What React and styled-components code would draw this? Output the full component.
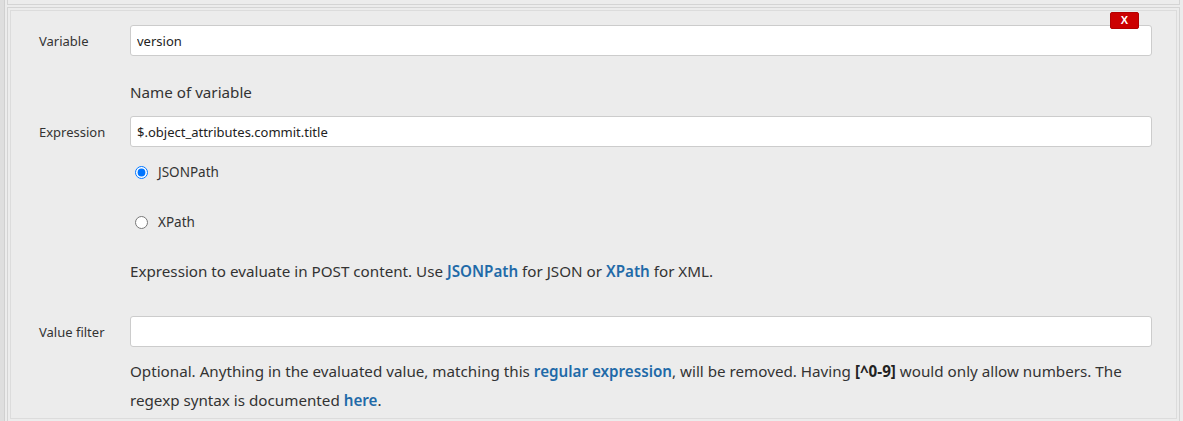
import styled, { createGlobalStyle } from "styled-components";

const GlobalStyle = createGlobalStyle`
  body {
    margin: 0;
    background: #ececec;
    font-family: "Noto Sans", "Open Sans", sans-serif;
    color: #333;
  }
`;

const Page = styled.div`
  display: flex;
  min-height: 421px;
`;

const SideStrip = styled.div`
  width: 4px;
  background: #dedede;
  border-right: 1px solid #d0d0d0;
  margin-right: 2px;
`;

const Column = styled.div`
  flex: 1;
  display: flex;
  flex-direction: column;
  margin-right: 3px;
`;

const PrevSection = styled.div`
  height: 4px;
  border: 1px solid #d4d4d4;
  border-top: none;
  margin-bottom: 2px;
`;

const Section = styled.div`
  position: relative;
  flex: 1;
  border: 1px solid #d4d4d4;
  border-bottom: none;
  padding: 17px 27px 0 31px;
  box-shadow: inset 0 0 0 2px #ececec, inset 0 0 0 3px #dcdcdc;
`;

const DeleteButton = styled.button`
  position: absolute;
  top: 4px;
  right: 40px;
  width: 29px;
  height: 17px;
  padding: 0;
  background: #cc0000;
  border: 1px solid #b30000;
  border-radius: 2px;
  color: #fff;
  font-family: "Liberation Sans", Arial, sans-serif;
  font-weight: bold;
  font-size: 11px;
  line-height: 15px;
  z-index: 1;
`;

const Row = styled.div`
  display: grid;
  grid-template-columns: 91px 1fr;
  align-items: center;
  margin-top: ${(p) => p.$top || 0}px;
`;

const Label = styled.label`
  font-size: 13px;
  color: #333;
`;

const TextInput = styled.input`
  box-sizing: border-box;
  width: 100%;
  height: 31px;
  padding: 0 6px;
  border: 1px solid #ccc;
  border-radius: 3px;
  background: #fff;
  font-family: inherit;
  font-size: 13px;
  color: #222;
  outline: none;
`;

const Body = styled.div`
  margin-left: 91px;
  margin-top: ${(p) => p.$top || 0}px;
`;

const Help = styled.div`
  font-size: 15.2px;
  line-height: 29px;
  color: #333;
  margin-top: ${(p) => p.$top || 0}px;
`;

const Link = styled.a`
  color: #1f6aa8;
  font-weight: 600;
  text-decoration: none;
`;

const Code = styled.b`
  font-weight: 700;
  color: #222;
`;

const RadioRow = styled.label`
  display: flex;
  align-items: center;
  height: 50px;
  padding-left: 5px;
  gap: 10px;
  font-size: 13.5px;
  color: #333;
`;

const Radio = styled.input`
  margin: 0;
  width: 13px;
  height: 13px;
  accent-color: #0075ff;
`;

export default function App() {
  return (
    <Page>
      <GlobalStyle />
      <SideStrip />
      <Column>
        <PrevSection />
        <Section>
          <DeleteButton>X</DeleteButton>
          <Row>
            <Label>Variable</Label>
            <TextInput defaultValue="version" />
          </Row>
          <Body $top={22}>
            <Help>Name of variable</Help>
          </Body>
          <Row $top={9}>
            <Label>Expression</Label>
            <TextInput defaultValue="$.object_attributes.commit.title" />
          </Row>
          <Body>
            <RadioRow>
              <Radio type="radio" name="type" defaultChecked />
              JSONPath
            </RadioRow>
            <RadioRow>
              <Radio type="radio" name="type" />
              XPath
            </RadioRow>
            <Help $top={10}>
              Expression to evaluate in POST content. Use <Link>JSONPath</Link> for JSON or{" "}
              <Link>XPath</Link> for XML.
            </Help>
          </Body>
          <Row $top={30}>
            <Label>Value filter</Label>
            <TextInput />
          </Row>
          <Body $top={10}>
            <Help>
              Optional. Anything in the evaluated value, matching this <Link>regular expression</Link>,
              will be removed. Having <Code>[^0-9]</Code> would only allow numbers. The regexp syntax
              is documented <Link>here</Link>.
            </Help>
          </Body>
        </Section>
      </Column>
    </Page>
  );
}
